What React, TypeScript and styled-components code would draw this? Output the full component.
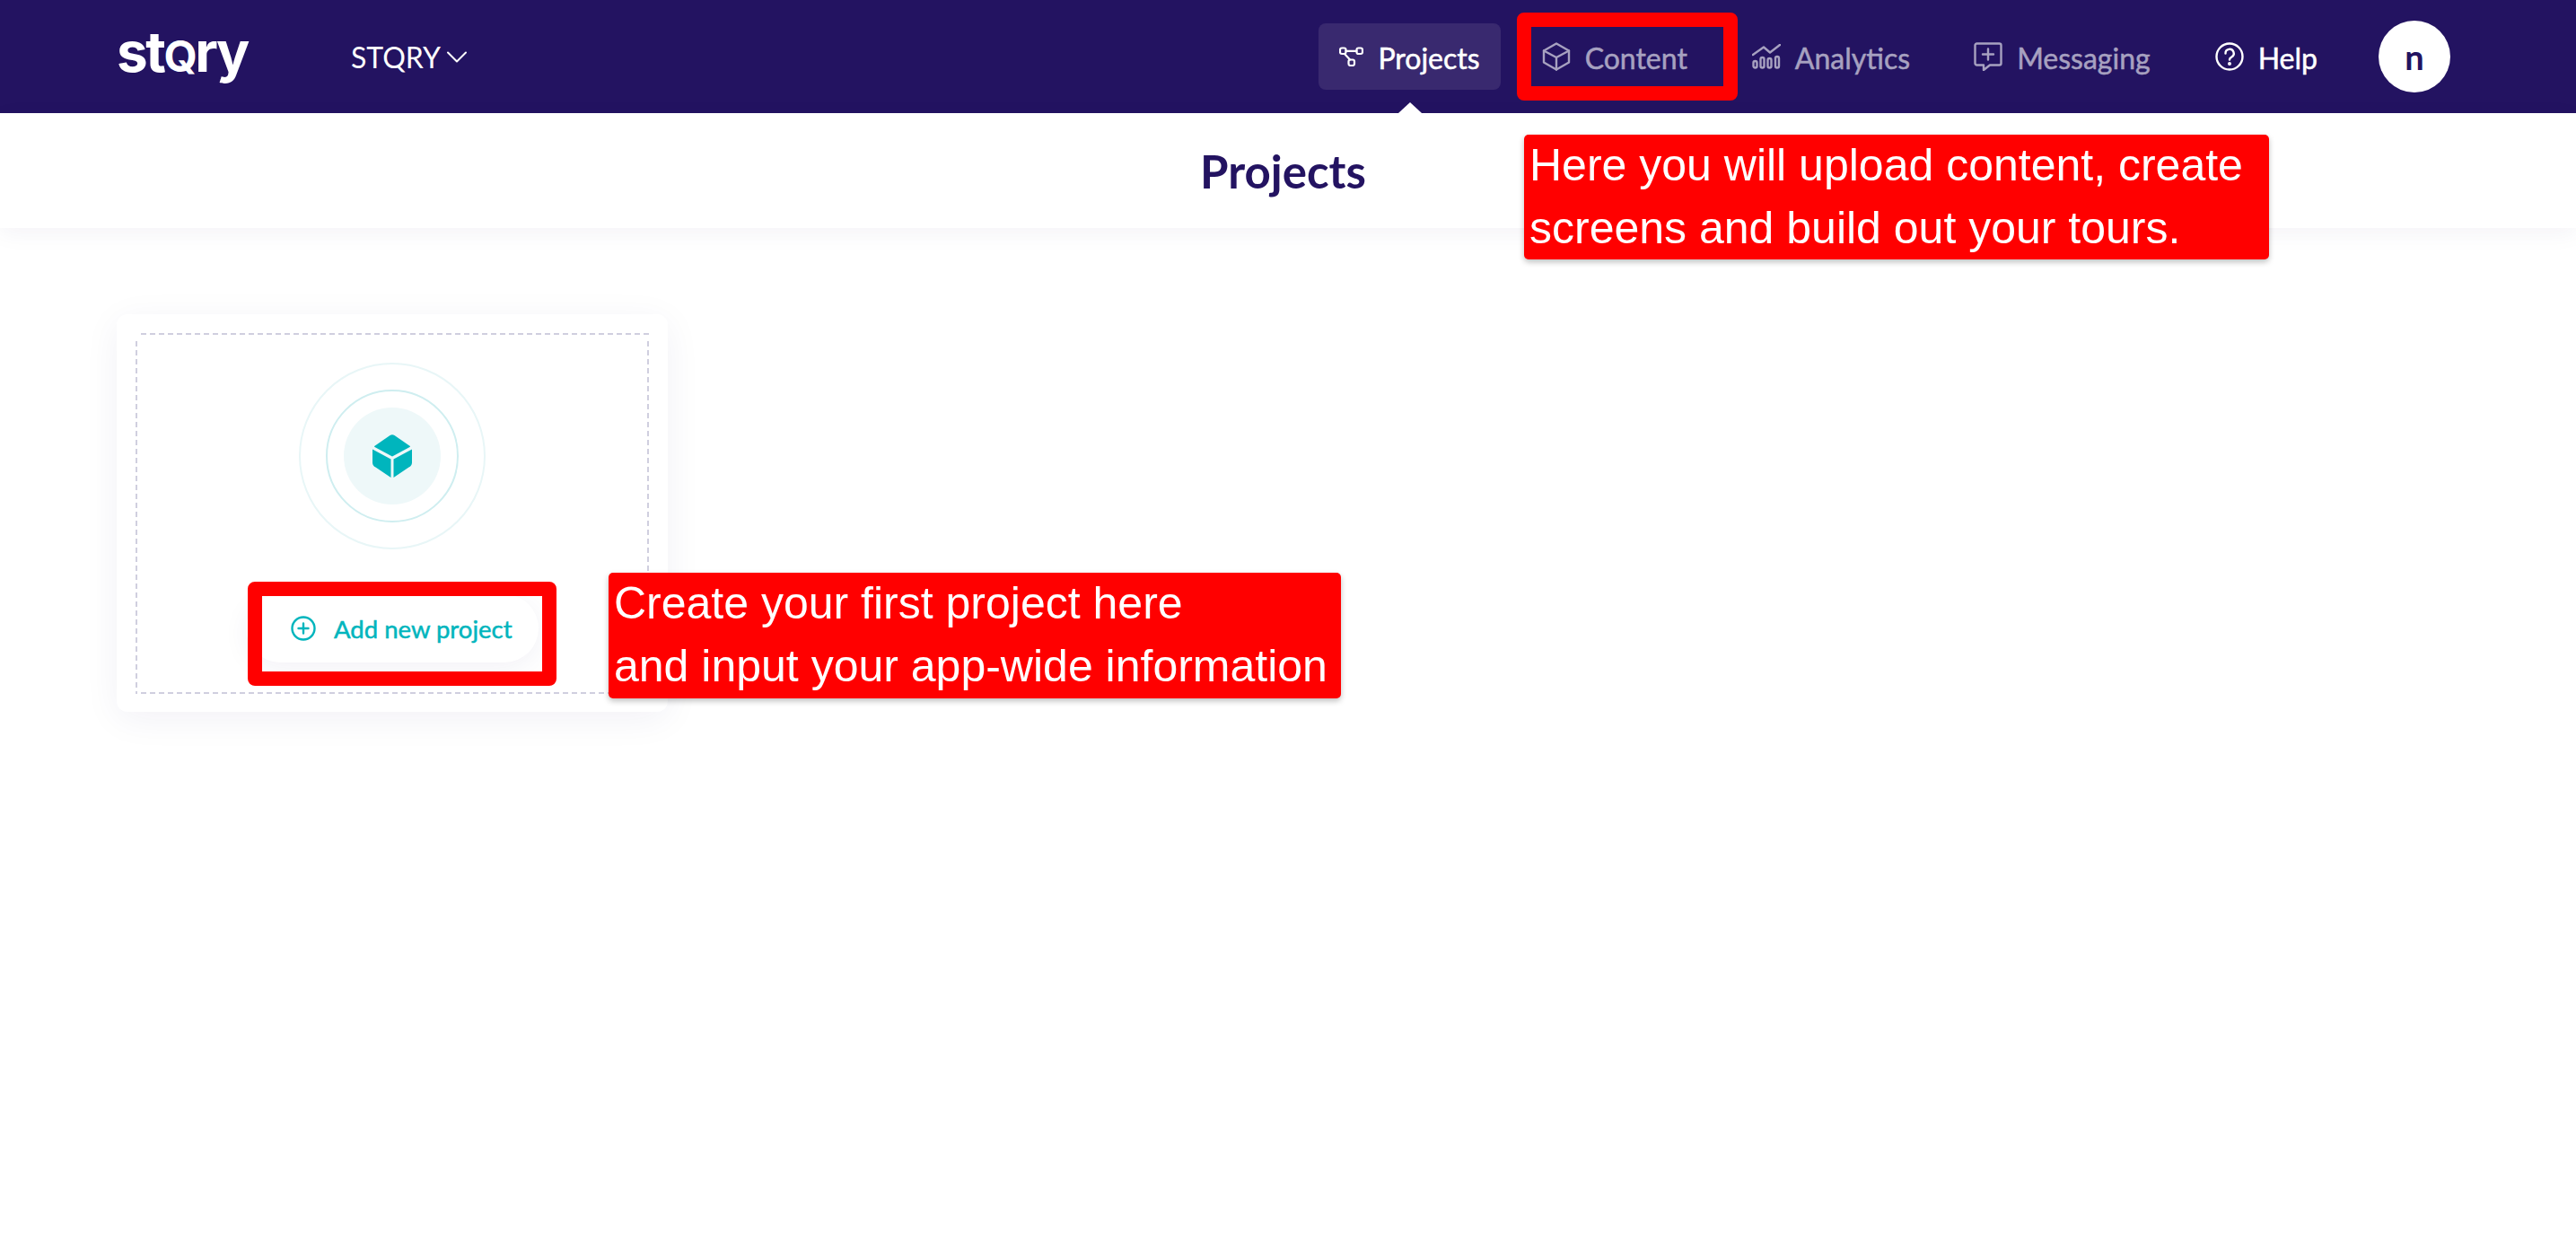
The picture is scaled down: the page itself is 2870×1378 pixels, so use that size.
import { createGlobalStyle, styled } from 'styled-components';
import type { ReactNode } from 'react';

const GlobalStyle = createGlobalStyle`
    html, body {
        margin: 0;
        padding: 0;
        background: #ffffff;
        font-family: Lato, "Liberation Sans", sans-serif;
    }
    * {
        box-sizing: border-box;
    }
`

const Page = styled.div`
    position: relative;
    width: 2870px;
    height: 1378px;
    overflow: hidden;
    background: #ffffff;
`

const Header = styled.header`
    display: flex;
    align-items: center;
    height: 126px;
    padding: 0 140px 0 130px;
    background: #231361;
`

const Logo = styled.div`
    width: 148px;
    margin-top: -11px;
    color: #ffffff;
    font-family: Inter, sans-serif;
    font-size: 62px;
    font-weight: 700;
    letter-spacing: -2.5px;
    line-height: 1;
    > span {
        font-size: 48px;
        text-transform: uppercase;
    }
`

const Workspace = styled.div`
    display: flex;
    align-items: center;
    gap: 7px;
    margin-left: 113px;
    color: #ffffff;
    font-size: 32px;
`

const Nav = styled.nav`
    display: flex;
    align-items: center;
    margin-left: auto;
`

const NavItem = styled.a<{ $state?: 'active' | 'bright'; $gap: number }>`
    display: flex;
    align-items: center;
    position: relative;
    height: 74px;
    gap: 16px;
    margin-right: ${p => p.$gap}px;
    padding: 0 ${p => p.$state === 'active' ? '23px' : '0'};
    border-radius: 8px;
    background: ${p => p.$state === 'active' ? '#39296f' : 'transparent'};
    color: ${p => p.$state ? '#ffffff' : '#a7a1c0'};
    font-size: 32px;
    &::after {
        content: '';
        display: ${p => p.$state === 'active' ? 'block' : 'none'};
        position: absolute;
        left: 50%;
        bottom: -26px;
        margin-left: -13px;
        border-left: 13px solid transparent;
        border-right: 13px solid transparent;
        border-bottom: 12px solid #ffffff;
    }
`

const NavLabel = styled.span`
    margin-top: 2px;
    -webkit-text-stroke: 0.5px currentColor;
`

const Avatar = styled.div`
    display: flex;
    align-items: center;
    justify-content: center;
    width: 80px;
    height: 80px;
    margin-left: 32px;
    border-radius: 50%;
    background: #ffffff;
    color: #231361;
    font-size: 38px;
    font-weight: 700;
`

const TitleBar = styled.div`
    display: flex;
    align-items: center;
    justify-content: center;
    height: 128px;
    padding-right: 11px;
    background: #ffffff;
    box-shadow: 0 6px 24px rgba(35, 19, 97, 0.05);
    > h1 {
        margin: 0;
        color: #231361;
        font-size: 51px;
        font-weight: 700;
    }
`

const Content = styled.main`
    padding: 96px 130px;
`

const Card = styled.section`
    width: 614px;
    height: 443px;
    padding: 21px;
    border-radius: 12px;
    background: #ffffff;
    box-shadow: 0 8px 40px rgba(35, 19, 97, 0.06);
`

const Dropzone = styled.div`
    display: flex;
    flex-direction: column;
    align-items: center;
    height: 402px;
    padding-top: 33px;
    background-image:
        repeating-linear-gradient(90deg, #d0cfdf 0 6px, transparent 6px 10px),
        repeating-linear-gradient(90deg, #d0cfdf 0 6px, transparent 6px 10px),
        repeating-linear-gradient(180deg, #d0cfdf 0 6px, transparent 6px 10px),
        repeating-linear-gradient(180deg, #d0cfdf 0 6px, transparent 6px 10px);
    background-size: 100% 2px, 100% 2px, 2px 100%, 2px 100%;
    background-position: 6px 0, 6px 100%, 0 9px, 100% 9px;
    background-repeat: no-repeat;
`

const OuterRing = styled.div`
    display: flex;
    align-items: center;
    justify-content: center;
    flex: none;
    width: 208px;
    height: 208px;
    border: 2px solid #e8f6f7;
    border-radius: 50%;
`

const MiddleRing = styled.div`
    display: flex;
    align-items: center;
    justify-content: center;
    width: 148px;
    height: 148px;
    border: 2px solid #cfeef0;
    border-radius: 50%;
`

const InnerDisc = styled.div`
    display: flex;
    align-items: center;
    justify-content: center;
    width: 108px;
    height: 108px;
    border-radius: 50%;
    background: #eef8f9;
`

const AddButton = styled.button`
    display: flex;
    align-items: center;
    flex: none;
    gap: 20px;
    width: 326px;
    height: 76px;
    margin-top: 50px;
    padding: 0 0 0 50px;
    border: 0;
    border-radius: 38px;
    background: #ffffff;
    box-shadow: 0 6px 30px rgba(35, 19, 97, 0.06);
    color: #00b5bd;
    font-family: inherit;
    font-size: 27.500px;
    -webkit-text-stroke: 0.5px currentColor;
`

const Outline = styled.div<{ $left: number; $top: number; $width: number; $height: number }>`
    position: absolute;
    left: ${p => p.$left}px;
    top: ${p => p.$top}px;
    width: ${p => p.$width}px;
    height: ${p => p.$height}px;
    border: 16px solid #ff0000;
    border-radius: 8px;
`

const Callout = styled.div<{ $left: number; $top: number; $width: number; $height: number }>`
    position: absolute;
    left: ${p => p.$left}px;
    top: ${p => p.$top}px;
    width: ${p => p.$width}px;
    height: ${p => p.$height}px;
    padding: 0 6px;
    border-radius: 5px;
    background: #ff0000;
    box-shadow: 0 3px 6px rgba(0, 0, 0, 0.25);
    color: #ffffff;
    font-family: "Liberation Sans", Arial, sans-serif;
    font-size: 50px;
    line-height: 69.5px;
    white-space: nowrap;
`

const Icon = ({ w, h, children, sw = 2.4 }: { w: number; h: number; sw?: number; children: ReactNode }) => (
    <svg width={w} height={h} viewBox={`0 0 ${w} ${h}`} fill="none" stroke="currentColor" strokeWidth={sw} strokeLinecap="round" strokeLinejoin="round">
        {children}
    </svg>
)

const ProjectsIcon = () => (
    <Icon w={27} h={22} sw={2.2}>
        <rect x="1" y="1.500" width="6.500" height="6.500" rx="2" />
        <rect x="19.500" y="1.500" width="6.500" height="6.500" rx="2" />
        <rect x="10.500" y="14.500" width="6.500" height="6.500" rx="2" />
        <path d="M7.500 4.800h12M6 8l6 6.500" />
    </Icon>
)

const ContentIcon = () => (
    <Icon w={32} h={32}>
        <path d="M16 1.500 30 9.500v13L16 30.500 2 22.500v-13Z" />
        <path d="M2 9.500 16 17l14-7.500M16 17v13.500" />
    </Icon>
)

const AnalyticsIcon = () => (
    <Icon w={32} h={28}>
        <path d="M1 12 13 3.500l7 6L31 1" />
        <rect x="1.500" y="19" width="4" height="7.500" rx="2" />
        <rect x="9.500" y="15" width="4" height="11.500" rx="2" />
        <rect x="17.500" y="16" width="4" height="10.500" rx="2" />
        <rect x="26" y="14" width="4" height="12.500" rx="2" />
    </Icon>
)

const MessagingIcon = () => (
    <Icon w={32} h={32}>
        <path d="M3.500 1.500h25a2 2 0 0 1 2 2v20a2 2 0 0 1-2 2H18l-7 5.500v-5.500H3.500a2 2 0 0 1-2-2v-20a2 2 0 0 1 2-2Z" />
        <path d="M16 7.500v12M10 13.500h12" />
    </Icon>
)

const HelpIcon = () => (
    <Icon w={32} h={32}>
        <circle cx="16" cy="16" r="14.500" />
        <path d="M11.500 12.500a4.600 4.600 0 1 1 6.800 4c-1.500.9-2.300 1.600-2.300 3" />
        <circle cx="16" cy="24" r="0.800" fill="currentColor" />
    </Icon>
)

const Chevron = () => (
    <Icon w={22} h={13} sw={2}>
        <path d="M1 1.500 11 11.500 21 1.500" />
    </Icon>
)

const PlusCircle = () => (
    <Icon w={28} h={28}>
        <circle cx="14" cy="14" r="12.500" />
        <path d="M14 8.500v11M8.500 14h11" />
    </Icon>
)

const CubeMark = () => (
    <svg width="44" height="48" viewBox="0 0 44 48" fill="#00b5bd">
        <path d="M19.500 1a4.500 4.500 0 0 1 5 0l17 11.800a.8.800 0 0 1 0 1.300L22 24.500 2.500 14.100a.8.800 0 0 1 0-1.300Z" />
        <path d="M0 16.500 20.500 27.500v20.500L3.500 36.500A6 6 0 0 1 0 31.500Z" />
        <path d="M44 16.500 23.500 27.500v20.500l17-11.500a6 6 0 0 0 3.500-5Z" />
    </svg>
)

export default function App() {
    return (
        <Page>
            <GlobalStyle />
            <Header>
                <Logo>st<span>q</span>ry</Logo>
                <Workspace>STQRY<Chevron /></Workspace>
                <Nav>
                    <NavItem $state="active" $gap={46}><ProjectsIcon /><NavLabel>Projects</NavLabel></NavItem>
                    <NavItem $gap={72}><ContentIcon /><NavLabel>Content</NavLabel></NavItem>
                    <NavItem $gap={71}><AnalyticsIcon /><NavLabel>Analytics</NavLabel></NavItem>
                    <NavItem $gap={72}><MessagingIcon /><NavLabel>Messaging</NavLabel></NavItem>
                    <NavItem $state="bright" $gap={36}><HelpIcon /><NavLabel>Help</NavLabel></NavItem>
                    <Avatar>n</Avatar>
                </Nav>
            </Header>
            <TitleBar><h1>Projects</h1></TitleBar>
            <Content>
                <Card>
                    <Dropzone>
                        <OuterRing>
                            <MiddleRing>
                                <InnerDisc><CubeMark /></InnerDisc>
                            </MiddleRing>
                        </OuterRing>
                        <AddButton><PlusCircle />Add new project</AddButton>
                    </Dropzone>
                </Card>
            </Content>
            <Outline $left={1690} $top={14} $width={246} $height={98} />
            <Outline $left={276} $top={648} $width={344} $height={116} />
            <Callout $left={1698} $top={150} $width={830} $height={139}>
                Here you will upload content, create<br />screens and build out your tours.
            </Callout>
            <Callout $left={678} $top={638} $width={816} $height={140}>
                Create your first project here<br />and input your app-wide information
            </Callout>
        </Page>
    )
}
